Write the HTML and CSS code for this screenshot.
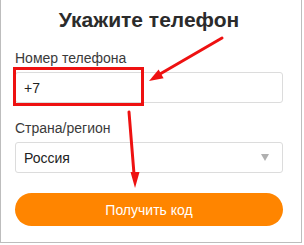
FILE: index.html
```html
<!DOCTYPE html>
<html lang="ru">
<head>
    <meta charset="UTF-8">
    <meta name="viewport" content="width=device-width, initial-scale=1.0">
    <title>Укажите телефон</title>
    <link rel="stylesheet" href="styles.css">
</head>
<body>
    <div class="panel">
        <h1 class="title">Укажите телефон</h1>

        <label class="label" for="phone">Номер телефона</label>
        <div class="field">
            <span class="field-text">+7</span>
        </div>

        <div class="label label-second">Страна/регион</div>
        <div class="field field-select">
            <span class="field-text">Россия</span>
            <span class="caret"></span>
        </div>

        <button class="submit" type="button">Получить код</button>

        <!-- annotations drawn over the form -->
        <div class="mark"></div>
        <svg class="arrows" width="302" height="243" viewBox="0 0 302 243">
            <line x1="222" y1="38" x2="160" y2="74" stroke="#ee1111" stroke-width="3" stroke-linecap="round"/>
            <polygon points="149,81 163.6,78.2 158.6,69.6" fill="#ee1111"/>
            <line x1="129" y1="112" x2="134" y2="174" stroke="#ee1111" stroke-width="3" stroke-linecap="round"/>
            <polygon points="135,188 139.5,172 130.5,172" fill="#ee1111"/>
        </svg>
    </div>
</body>
</html>
```

FILE: styles.css
```css
body {
    margin: 0;
    background-color: #fff;
    font-family: "Liberation Sans", Arial, sans-serif;
    color: #333;
}

.panel {
    position: relative;
    box-sizing: border-box;
    width: 302px;
    height: 243px;
    padding: 8px 18px 0 14px;
    border: 1px solid #bdbdbd;
    border-top: none;
    display: flex;
    flex-direction: column;
}

.title {
    margin: 0 0 18px;
    font-size: 21px;
    line-height: 24px;
    font-weight: bold;
    text-align: center;
    color: #2b2b2b;
}

.label {
    display: block;
    font-size: 14px;
    line-height: 16px;
    color: #3a3a3a;
    margin-bottom: 6px;
}

.label-second {
    margin-top: 17px;
}

.field {
    box-sizing: border-box;
    height: 31px;
    border: 1px solid #dcdcdc;
    border-radius: 3px;
    padding: 0 13px 0 8px;
    display: flex;
    align-items: center;
    justify-content: space-between;
}

.field-text {
    font-size: 14px;
    color: #222;
}

.caret {
    width: 0;
    height: 0;
    border-left: 4px solid transparent;
    border-right: 4px solid transparent;
    border-top: 7px solid #b0b0b0;
}

.submit {
    margin-top: 20px;
    height: 33px;
    border: none;
    border-radius: 17px;
    background-color: #ff8500;
    color: #fff;
    font-family: inherit;
    font-size: 14px;
}

.mark {
    position: absolute;
    left: 12px;
    top: 67px;
    width: 125px;
    height: 33px;
    border: 3px solid #ee1111;
}

.arrows {
    position: absolute;
    left: -1px;
    top: 0;
}
```
